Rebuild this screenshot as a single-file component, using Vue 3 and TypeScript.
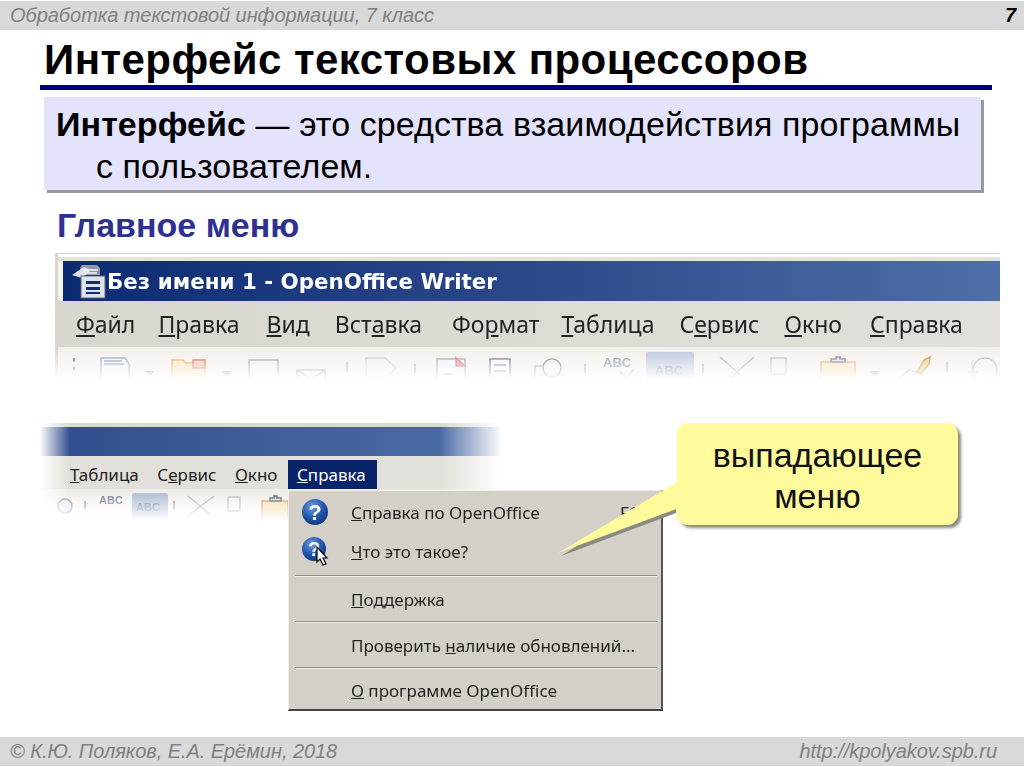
<script setup lang="ts">
interface MenuEntry { pre: string; key: string; post: string }
const topMenu: MenuEntry[] = [
  { pre: '', key: 'Ф', post: 'айл' },
  { pre: '', key: 'П', post: 'равка' },
  { pre: '', key: 'В', post: 'ид' },
  { pre: 'Вст', key: 'а', post: 'вка' },
  { pre: 'Фо', key: 'р', post: 'мат' },
  { pre: '', key: 'Т', post: 'аблица' },
  { pre: 'С', key: 'е', post: 'рвис' },
  { pre: '', key: 'О', post: 'кно' },
  { pre: '', key: 'С', post: 'правка' }
]
const lowerMenu: MenuEntry[] = topMenu.slice(5, 8)
</script>

<template>
  <div class="slide">
    <header class="bar top-bar">
      <span>Обработка текстовой информации, 7 класс</span>
      <b class="page-no">7</b>
    </header>

    <main class="content">
      <h1 class="title">Интерфейс текстовых процессоров</h1>
      <p class="definition"><b>Интерфейс</b> — это средства взаимодействия программы с пользователем.</p>
      <h2 class="subtitle">Главное меню</h2>

      <section class="shot">
        <div class="titlebar">
          <svg class="app-icon" width="36" height="38" viewBox="0 0 36 38">
            <path d="M10 3h15l3 3v7H8V6z" fill="#8f98a8" />
            <path d="M0 13l12-8 7 3-9 8z" fill="#dfe3ea" />
            <path d="M12 8h14M13 11h12" stroke="#f4f4f4" stroke-width="1.5" />
            <rect x="9" y="14" width="24" height="22" fill="#dfe4ec" stroke="#5b6478" />
            <rect x="14" y="19" width="14" height="3" fill="#10306e" />
            <rect x="14" y="25" width="14" height="3" fill="#10306e" />
            <rect x="14" y="30" width="14" height="2" fill="#10306e" />
          </svg>
          <span class="titlebar-text">Без имени 1 - OpenOffice Writer</span>
        </div>
        <nav class="menubar">
          <span v-for="m in topMenu" :key="m.pre + m.key + m.post">{{ m.pre }}<u>{{ m.key }}</u>{{ m.post }}</span>
        </nav>
        <div class="toolbar">
          <svg width="942" height="38" viewBox="58 347 942 38">
            <g fill="none" stroke="#8d97a6" stroke-width="1.5">
              <path d="M74 358v4M74 367v3" stroke="#667" stroke-width="2" />
              <path d="M101 358h24l4 6v20h-28z" fill="#eef1f5" />
              <path d="M104 361h18M104 364h20" stroke="#7f8a9c" />
              <path d="M145 371h10l-5 5z" fill="#8d8d8d" stroke="none" />
              <path d="M172 378v-18h11l3 3h5l3-3h11v18z" fill="#f6dfae" stroke="#d9a35a" />
              <path d="M193 360h12v8h-12z" fill="#eeb29a" stroke="#c7654a" />
              <path d="M222 371h10l-5 5z" fill="#8d8d8d" stroke="none" />
              <rect x="249" y="360" width="29" height="24" />
              <path d="M297 370h28v14h-28zM297 370l14 9 14-9" />
              <path d="M347 362v10" />
              <path d="M366 358h19l11 10-11 10h-19z" stroke="#c4c8ce" />
              <path d="M415 364v9" />
              <rect x="437" y="359" width="28" height="22" fill="#eef1f5" />
              <path d="M444 374h8" />
              <path d="M456 358l9 8h-9z" fill="#e0828a" stroke="#d0606c" />
              <rect x="490" y="359" width="20" height="22" fill="#f5f6f9" stroke="#55617a" />
              <path d="M494 365h12M494 371h12" stroke="#6a7892" />
              <path d="M535 366h13M535 366v15" />
              <circle cx="552" cy="368" r="9" fill="#e8eef4" stroke="#72808f" />
              <path d="M585 364v9" />
              <rect x="646" y="352" width="48" height="36" rx="2" fill="#b9c4da" stroke="none" />
              <path d="M703 364v9" />
              <path d="M720 357l16 14 4 4M754 357l-16 14-6 6" stroke="#a0a8b0" />
              <path d="M771 358h15v16h-15z" stroke="#b8bcc2" />
              <path d="M821 362h34v22h-34z" fill="#f5dfb2" stroke="#c9a770" />
              <path d="M831 362v-3h5v-2h4v2h5v3z" fill="#dde" stroke="#70727c" />
              <path d="M870 371h10l-5 5z" fill="#8d8d8d" stroke="none" />
              <path d="M897 380l12-10 8 2" stroke="#9fb6cc" />
              <path d="M917 372l7-12 6-3-1 7-8 10z" fill="#e5c46a" stroke="#b08b3a" />
              <path d="M947 362v10" />
              <circle cx="985" cy="370" r="12" stroke="#aeb4bb" />
              <path d="M968 372h10M972 362v18" stroke="#c4c8ce" />
            </g>
            <text x="603" y="367" class="abc">ABC</text>
            <text x="655" y="375" class="abc">ABC</text>
            <path d="M620 372l6 6 8-9" fill="none" stroke="#9fb7cf" stroke-width="2" />
          </svg>
        </div>
      </section>

      <section class="lower">
        <div class="lower-shot">
          <div class="lower-title"></div>
          <nav class="lower-menu">
            <span v-for="m in lowerMenu" :key="m.pre + m.key + m.post">{{ m.pre }}<u>{{ m.key }}</u>{{ m.post }}</span>
            <span class="active"><u>С</u>правка</span>
          </nav>
          <div class="lower-tools">
            <svg width="270" height="32" viewBox="40 491 270 32">
              <g fill="none" stroke="#8d97a6" stroke-width="1.5">
                <circle cx="65" cy="508" r="7" fill="#e8eef4" />
                <path d="M85 503v8" />
                <rect x="132" y="495" width="36" height="28" rx="2" fill="#b9c4da" stroke="none" />
                <path d="M174 503v8" />
                <path d="M188 498l24 20M214 498l-26 20" stroke="#b7bdc4" />
                <path d="M228 499h12v14h-12z" stroke="#c0c4ca" />
                <path d="M262 503h26v20h-26z" fill="#f5dfb2" stroke="#c9a770" />
                <path d="M270 503v-3h4v-2h3v2h4v3z" fill="#dde" stroke="#70727c" />
              </g>
              <text x="99" y="506" class="abc small">ABC</text>
              <text x="136" y="513" class="abc small">ABC</text>
            </svg>
          </div>
        </div>

        <div class="dropdown">
          <div class="entry first">
            <svg class="help" width="30" height="30" viewBox="0 0 30 30">
              <defs>
                <radialGradient id="ball" cx="40%" cy="30%" r="70%">
                  <stop offset="0" stop-color="#6f9be0" />
                  <stop offset=".6" stop-color="#2458b0" />
                  <stop offset="1" stop-color="#123a80" />
                </radialGradient>
              </defs>
              <circle cx="15" cy="15" r="13" fill="url(#ball)" />
              <text x="15" y="23" class="q">?</text>
            </svg>
            <span><u>С</u>правка по OpenOffice</span>
            <span class="hotkey">F1</span>
          </div>
          <div class="entry second">
            <svg class="help" width="32" height="32" viewBox="0 0 32 32">
              <circle cx="14" cy="14" r="12" fill="url(#ball)" />
              <text x="14" y="21" class="q q2">?</text>
              <path d="M17 12v15l3-3 3 6 3-1-3-6h4z" fill="#fff" stroke="#000" stroke-width="1.2" />
            </svg>
            <span><u>Ч</u>то это такое?</span>
          </div>
          <hr />
          <div class="entry plain"><span><u>П</u>оддержка</span></div>
          <hr />
          <div class="entry plain"><span>Проверить <u>н</u>аличие обновлений...</span></div>
          <hr />
          <div class="entry plain last"><span><u>О</u> программе OpenOffice</span></div>
        </div>

        <div class="callout">
          <svg class="tail" width="125" height="90" viewBox="0 0 125 90">
            <path d="M120 11L5 83 120 40z" fill="#8a8a80" />
            <path d="M123 8L2 80 123 35z" fill="#fffb9c" />
          </svg>
          <span class="callout-text">выпадающее меню</span>
        </div>
      </section>
    </main>

    <footer class="bar bottom-bar">
      <span>© К.Ю. Поляков, Е.А. Ерёмин, 2018</span>
      <span class="url">http://kpolyakov.spb.ru</span>
    </footer>
  </div>
</template>

<style>
html, body { margin: 0; background: #fff; }
</style>

<style scoped>
.slide {
  width: 1024px;
  height: 767px;
  overflow: hidden;
  display: flex;
  flex-direction: column;
  padding: 1px 0;
  box-sizing: border-box;
  font-family: "Liberation Sans", Arial, sans-serif;
}
.bar {
  flex: none;
  height: 29px;
  background: #d9d9d9;
  color: #808080;
  font-style: italic;
  font-size: 20px;
  letter-spacing: -.05px;
  display: flex;
  align-items: center;
  justify-content: space-between;
  padding: 0 8px 0 10px;
  box-sizing: border-box;
}
.page-no { color: #000; font-size: 20px; }
.url { margin-right: 19px; }
.content { flex: 1; min-height: 0; }
.title {
  margin: 9px 32px 0 40px;
  padding: 0 0 0 4px;
  height: 46px;
  line-height: 42px;
  font-size: 42px;
  letter-spacing: .45px;
  font-weight: 700;
  color: #000;
  border-bottom: 5px solid #000080;
}
.definition {
  margin: 7px 43px 0 44px;
  height: 93px;
  padding: 6px 12px 0 52px;
  box-sizing: border-box;
  text-indent: -40px;
  background: #e3e3fb;
  box-shadow: 3px 3px 0 #9a9a9a;
  font-size: 34px;
  letter-spacing: .08px;
  line-height: 42px;
  color: #000;
}
.subtitle {
  margin: 19px 0 0 57px;
  height: 36px;
  line-height: 32px;
  font-size: 34px;
  font-weight: 700;
  color: #2e3192;
}
.shot {
  margin: 8px 24px 0 55px;
  padding: 7px 0 0 0;
  border-top: 1px solid #d8d5cd;
  border-left: 3px solid #d8d5cd;
  background: linear-gradient(to bottom, #fff 0, #fff 3px, #e6e3dc 3px, #e6e3dc 7px, #f4f3ef 7px);
  filter: blur(.4px);
  -webkit-mask-image: linear-gradient(to bottom, #000 0, #000 94px, transparent 127px);
  mask-image: linear-gradient(to bottom, #000 0, #000 94px, transparent 127px);
}
.titlebar {
  height: 40px;
  margin-left: 5px;
  display: flex;
  align-items: center;
  background: linear-gradient(to right, #0c2a72, #2f4d8c 55%, #4f6fa8);
  color: #fff;
}
.app-icon { margin: 0 0 0 9px; flex: none; }
.titlebar-text {
  margin-left: -1px;
  font-family: "DejaVu Sans", sans-serif;
  font-weight: 700;
  font-size: 21.4px;
}
.menubar {
  height: 46px;
  display: flex;
  align-items: center;
  padding-left: 18px;
  gap: 25px;
  background: linear-gradient(to right, #d9d6cf, #e2e0da);
  font-family: "Noto Sans", sans-serif;
  font-size: 23px;
  color: #222;
}
.menubar span:nth-child(2) { margin-left: -2px; }
.menubar span:nth-child(3) { margin-left: 2px; }
.menubar span:nth-child(5) { margin-left: 5px; }
.menubar span:nth-child(6) { margin-left: -3px; }
.menubar span:nth-child(9) { margin-left: 3px; }
.toolbar {
  height: 38px;
  background: #f1efeb;
}
.toolbar svg { display: block; }
.abc {
  font-family: "Liberation Sans", sans-serif;
  font-weight: 700;
  font-size: 13px;
  fill: #7d8aa3;
}
.abc.small { font-size: 11px; }
.lower { position: relative; margin: 38px 0 0 40px; width: 944px; height: 287px; }
.lower-shot {
  width: 465px;
  padding-top: 4px;
  background: linear-gradient(to bottom, #dcd9d2 4px, transparent 4px);
  filter: blur(.4px);
  -webkit-mask-image: linear-gradient(to right, transparent 0, #000 30px, #000 400px, transparent 462px);
  mask-image: linear-gradient(to right, transparent 0, #000 30px, #000 400px, transparent 462px);
}
.lower-title {
  height: 29px;
  background: linear-gradient(to right, #2f4d8c, #4f6fa8);
}
.lower-menu {
  height: 33px;
  box-sizing: border-box;
  display: flex;
  align-items: center;
  padding: 3px 0 0 30px;
  gap: 18.5px;
  background: #e2e0da;
  font-family: "Noto Sans", sans-serif;
  font-size: 17px;
  color: #222;
}
.lower-menu .active {
  align-self: flex-end;
  height: 29px;
  line-height: 29px;
  width: 89px;
  box-sizing: border-box;
  padding-left: 9px;
  margin-left: -8px;
  background: #0a246a;
  color: #fff;
}
.lower-tools {
  height: 32px;
  background: linear-gradient(to bottom, #efece7, #fff);
  -webkit-mask-image: linear-gradient(to bottom, #000 20%, transparent 100%);
  mask-image: linear-gradient(to bottom, #000 20%, transparent 100%);
}
.lower-tools svg { display: block; }
.dropdown {
  position: absolute;
  left: 248px;
  top: 67px;
  width: 375px;
  height: 221px;
  box-sizing: border-box;
  background: #d4d0c8;
  border-top: 1px solid #f0eee9;
  border-left: 1px solid #efeeea;
  border-right: 2px solid #555;
  border-bottom: 2px solid #444;
  font-family: "Noto Sans", sans-serif;
  font-size: 17px;
  color: #222;
  filter: blur(.3px);
  display: flex;
  flex-direction: column;
}
.entry {
  position: relative;
  flex: none;
  box-sizing: border-box;
  display: flex;
  align-items: center;
  padding-left: 62px;
}
.entry.first { height: 42px; }
.entry.second { height: 42px; padding-bottom: 6px; }
.entry.plain { height: 44px; }
.entry.last { height: 40px; padding-top: 2px; }
.help { position: absolute; left: 11px; top: 6px; }
.entry.second .help { top: 2px; }
.q {
  font-family: "Liberation Sans", sans-serif;
  font-weight: 700;
  font-size: 22px;
  fill: #fff;
  text-anchor: middle;
}
.q2 { font-size: 20px; }
.hotkey { position: absolute; left: 331px; }
hr {
  flex: none;
  width: 362px;
  margin: 0 0 0 6px;
  height: 2px;
  border: 0;
  border-top: 1px solid #8f8c86;
  border-bottom: 1px solid #f4f3f0;
  box-sizing: border-box;
}
.callout {
  position: absolute;
  left: 637px;
  top: 0;
  width: 281px;
  height: 102px;
  box-sizing: border-box;
  border-radius: 11px;
  background: #fffb9c;
  box-shadow: 3px 3px 3px #8a8a80;
  display: flex;
  align-items: center;
  justify-content: center;
  text-align: center;
  font-size: 34px;
  line-height: 41px;
  color: #111;
  padding: 3px 30px 0;
}
.callout-text { position: relative; z-index: 1; }
.tail { position: absolute; left: -121px; top: 50px; }
</style>
